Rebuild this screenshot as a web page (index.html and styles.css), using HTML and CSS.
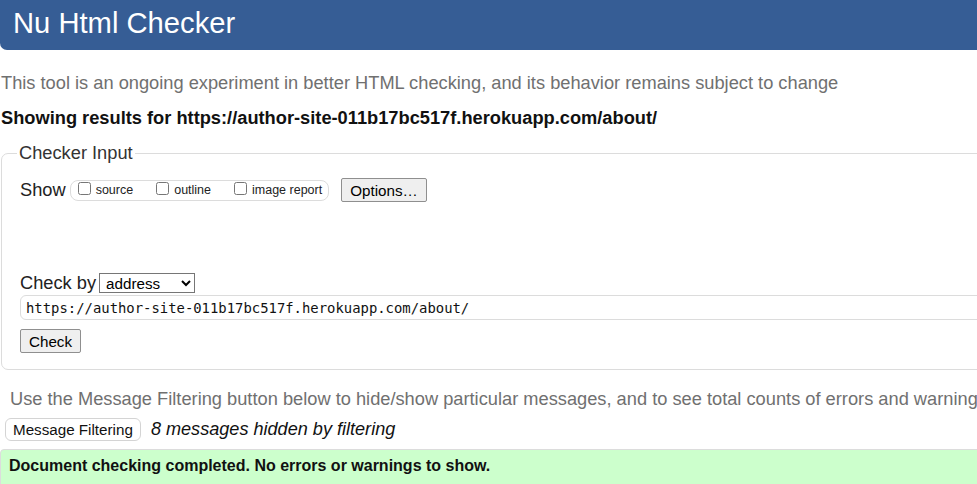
FILE: index.html
```html
<!DOCTYPE html>
<html lang="en">
<head>
<meta charset="utf-8">
<title>Nu Html Checker</title>
<link rel="stylesheet" href="styles.css">
</head>
<body>
<div class="page">
  <header class="masthead"><h1>Nu Html Checker</h1></header>
  <p class="intro">This tool is an ongoing experiment in better HTML checking, and its behavior remains subject to change</p>
  <p class="results-for">Showing results for https://author-site-011b17bc517f.herokuapp.com/about/</p>
  <form class="checker">
    <fieldset class="input-set">
      <legend>Checker Input</legend>
      <div class="show-row">
        <span class="label">Show</span>
        <span class="show-group">
          <label><input type="checkbox"> source</label>
          <label><input type="checkbox"> outline</label>
          <label><input type="checkbox"> image report</label>
        </span>
        <button type="button" class="btn">Options…</button>
      </div>
      <div class="checkby-row">
        <span class="label">Check by</span>
        <select class="sel"><option>address</option></select>
      </div>
      <input class="url" type="text" value="https://author-site-011b17bc517f.herokuapp.com/about/">
      <div><button type="button" class="btn check">Check</button></div>
    </fieldset>
  </form>
  <p class="filter-note">Use the Message Filtering button below to hide/show particular messages, and to see total counts of errors and warnings.</p>
  <div class="filter-row">
    <button type="button" class="filter-btn">Message Filtering</button>
    <em>8 messages hidden by filtering</em>
  </div>
  <div class="success">Document checking completed. No errors or warnings to show.</div>
</div>
</body>
</html>
```
FILE: styles.css
```css
html, body {
  margin: 0;
  padding: 0;
  overflow: hidden;
  background: #fff;
}
body {
  font-family: "Liberation Sans", Arial, sans-serif;
  color: #000;
}
.page {
  width: 1040px;
}
.masthead {
  background: #365d95;
  height: 50px;
  border-radius: 0 0 0 7px;
  display: flex;
  align-items: center;
  padding-left: 13px;
}
.masthead h1 {
  margin: 0;
  color: #fff;
  font-weight: normal;
  font-size: 29.2px;
  line-height: 1;
  position: relative;
  top: -1px;
}
.intro {
  margin: 22px 0 0 1px;
  font-size: 18.25px;
  line-height: 22px;
  color: #707070;
}
.results-for {
  margin: 13px 0 0 1px;
  font-size: 18.25px;
  line-height: 22px;
  font-weight: bold;
  color: #111;
}
.checker {
  margin: 13px 0 0 1px;
}
.input-set {
  margin: 0;
  border: 1px solid #dcdcdc;
  border-radius: 7px;
  padding: 10px 18px 16px 18px;
}
.input-set legend {
  font-size: 18.25px;
  color: #333;
  padding: 0 2px;
  margin-left: -3px;
}
.label {
  font-size: 18.25px;
  color: #222;
}
.show-row {
  display: flex;
  align-items: center;
  margin-top: 4px;
  height: 24px;
}
.show-group {
  margin-left: 4px;
  border: 1px solid #dcdcdc;
  border-radius: 8px;
  height: 19px;
  display: flex;
  align-items: center;
  padding: 0 6px 0 7px;
  gap: 23px;
  font-size: 12.5px;
  color: #222;
}
.show-group label {
  display: flex;
  align-items: center;
}
.show-group input {
  margin: 0 5px 0 0;
  width: 13px;
  height: 13px;
  position: relative;
  top: -2px;
}
.btn {
  font-family: "Liberation Sans", Arial, sans-serif;
  font-size: 15.2px;
  background: #efefef;
  border: 1px solid #8f8f8f;
  border-radius: 2px;
  color: #000;
  padding: 0 8px;
  height: 24px;
  margin-left: 12px;
}
.checkby-row {
  display: flex;
  align-items: center;
  margin-top: 70px;
}
.sel {
  margin-left: 3px;
  font-family: "Liberation Sans", Arial, sans-serif;
  font-size: 15.2px;
  height: 20px;
  width: 96px;
  border: 1px solid #767676;
  border-radius: 0;
  background: #fff;
  padding: 0 2px;
}
.url {
  display: block;
  box-sizing: border-box;
  width: 1100px;
  margin-top: 1px;
  height: 25px;
  border: 1px solid #dcdcdc;
  border-radius: 6px;
  padding: 0 5px;
  font-family: "DejaVu Sans Mono", monospace;
  font-size: 13.9px;
  color: #111;
}
.btn.check {
  margin: 9px 0 0 0;
  padding: 0 8px;
}
.filter-note {
  margin: 18px 0 0 10px;
  font-size: 18.25px;
  line-height: 22px;
  color: #707070;
  white-space: nowrap;
}
.filter-row {
  display: flex;
  align-items: center;
  margin: 8px 0 0 5px;
}
.filter-btn {
  font-family: "Liberation Sans", Arial, sans-serif;
  font-size: 15.2px;
  background: #fff;
  border: 1px solid #d4d4d4;
  border-radius: 6px;
  height: 23px;
  padding: 0 7px;
  color: #111;
}
.filter-row em {
  margin-left: 10px;
  font-size: 18.1px;
  color: #111;
}
.success {
  margin-top: 8px;
  background: #ccffcc;
  border: 1px solid #dcdcdc;
  border-radius: 4px;
  padding: 7px 8px 12px;
  font-size: 16px;
  font-weight: bold;
  color: #111;
}
```
